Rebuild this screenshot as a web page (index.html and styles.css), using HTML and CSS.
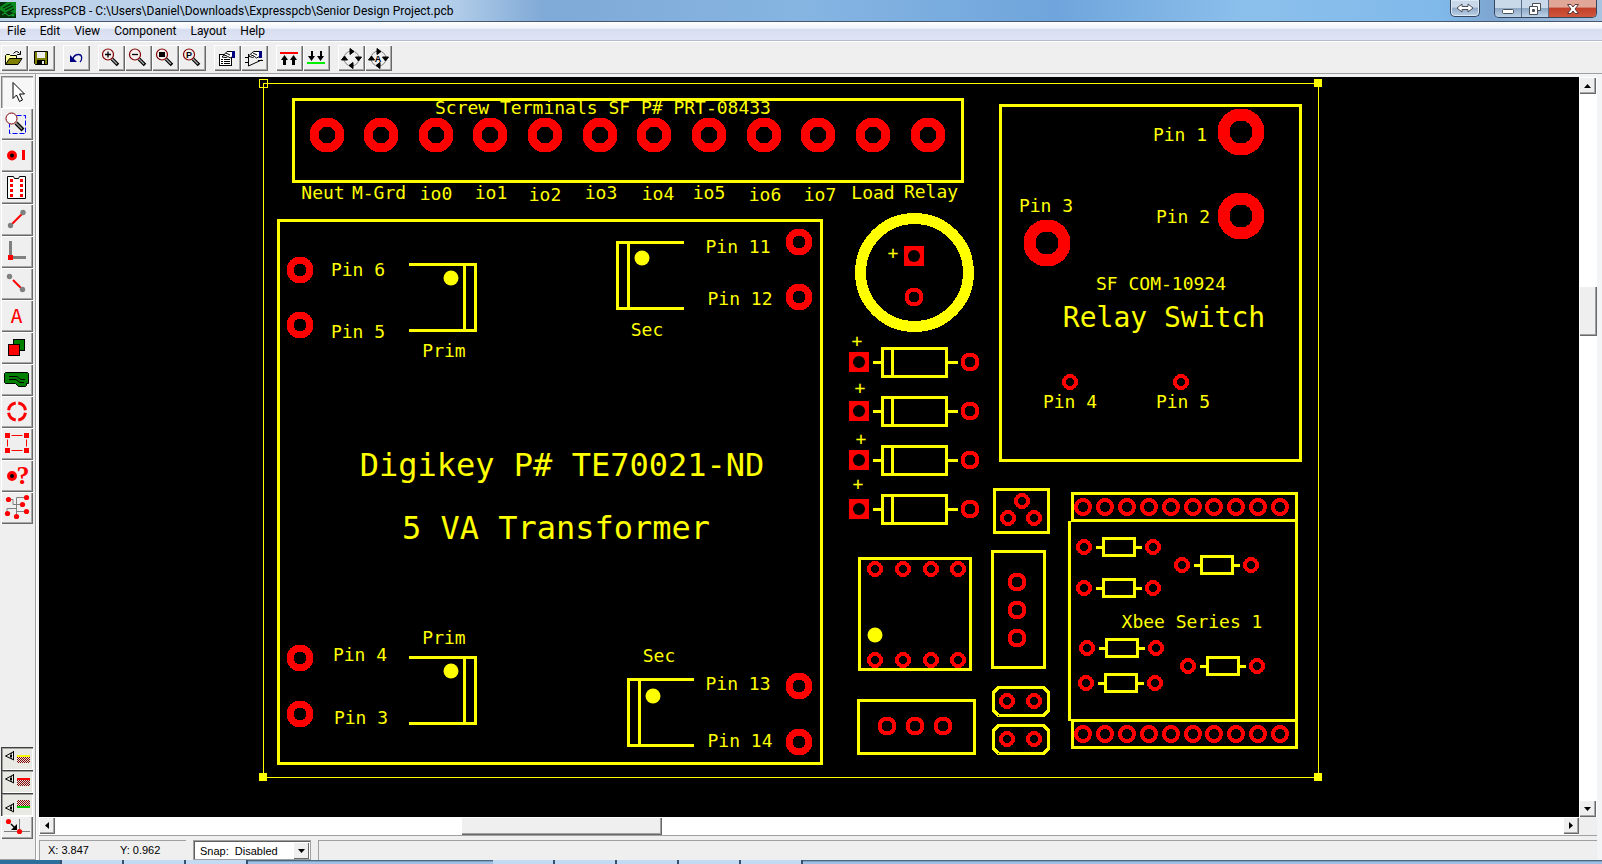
FILE: index.html
```html
<!DOCTYPE html>
<html lang="en">
<head>
<meta charset="utf-8">
<title>ExpressPCB - C:\Users\Daniel\Downloads\Expresspcb\Senior Design Project.pcb</title>
<link rel="stylesheet" href="styles.css">
</head>
<body>
<div class="window">
  <header class="titlebar">
    <svg class="app-icon" width="16" height="16" viewBox="0 0 16 16" aria-hidden="true">
      <rect width="16" height="16" fill="#0a8a1e"/>
      <path d="M0 0h7L0 5zM0 8l5 3 4-2 7 3v4H0z" fill="#04300a"/>
      <path d="M3 6l8-4M5 8l8-4M8 10l6-3" stroke="#032806" stroke-width="1.2"/>
      <path d="M2 13l3-2 4 3 4-2" stroke="#1fb03a" fill="none"/>
      <circle cx="13" cy="13" r="1.600" fill="#12a02c"/>
    </svg>
    <h1 class="title">ExpressPCB - C:\Users\Daniel\Downloads\Expresspcb\Senior Design Project.pcb</h1>
    <div class="caption">
      <button class="cap cap-size" aria-label="Resize"><svg width="18" height="10" viewBox="0 0 18 10"><path d="M1 5l5-4v2.500h6V1l5 4-5 4V6.500H6V9z" fill="#fff" stroke="#4a5058"/></svg></button>
      <div class="cap-group">
        <button class="cap cap-min" aria-label="Minimize"><svg width="14" height="12" viewBox="0 0 14 12"><rect x="1.500" y="6.500" width="11" height="4" rx="1" fill="#fff" stroke="#4a5058"/></svg></button>
        <button class="cap cap-restore" aria-label="Restore"><svg width="14" height="12" viewBox="0 0 14 12"><path d="M4.500 .5h8v7h-8z" fill="#fff" stroke="#4a5058"/><path d="M1.500 3.500h8v8h-8zM4.500 6.500h2v2h-2z" fill="#fff" stroke="#4a5058" fill-rule="evenodd"/></svg></button>
        <button class="cap cap-close" aria-label="Close"><svg width="14" height="12" viewBox="0 0 14 12"><path d="M1.500 1.500h3.500l2 2.500 2-2.500h3.500L9 6l3.500 4.500H9L7 8l-2 2.500H1.500L5 6z" fill="#fff" stroke="#5a3a3a"/></svg></button>
      </div>
    </div>
  </header>

  <nav class="menubar">
    <button class="menu">File</button><button class="menu">Edit</button><button class="menu">View</button><button class="menu">Component</button><button class="menu">Layout</button><button class="menu">Help</button>
  </nav>

  <div class="toolbar" role="toolbar">
    <div class="group">
      <button class="tool" aria-label="Open"><svg viewBox="0 0 27 26"><path d="M4.500 19.500v-9l1-1h3l1 1h6v3" fill="#ffff9c" stroke="#000"/><path d="M4.500 19.500l4-6H21l-4 6z" fill="#808000" stroke="#000"/><path d="M12.500 8.500q3-4 6 0M19.500 6v3.500H16" fill="none" stroke="#000"/></svg></button>
      <button class="tool" aria-label="Save"><svg viewBox="0 0 27 26"><path d="M6.500 6.500h13v13h-12l-1-1z" fill="#808000" stroke="#000"/><rect x="9" y="7" width="8" height="6" fill="#eee"/><rect x="9" y="15" width="8" height="5"/><rect x="14" y="16" width="2" height="3" fill="#eee"/></svg></button>
    </div>
    <div class="group">
      <button class="tool" aria-label="Undo"><svg viewBox="0 0 27 26"><path d="M7 10v7h7z" fill="#000080"/><path d="M9.500 14.500c1-3 3-5 6-5 4 0 4 5 1.500 7.500" fill="none" stroke="#000080" stroke-width="1.300"/></svg></button>
    </div>
    <div class="group">
      <button class="tool" aria-label="Zoom in"><svg viewBox="0 0 27 26"><use href="#lens"/><path d="M7 9.500h6M10 6.500v6" stroke="#000" stroke-width="1.300"/></svg></button>
      <button class="tool" aria-label="Zoom out"><svg viewBox="0 0 27 26"><use href="#lens"/><path d="M7 9.500h6" stroke="#000" stroke-width="1.300"/></svg></button>
      <button class="tool" aria-label="Zoom to fit"><svg viewBox="0 0 27 26"><use href="#lens"/><rect x="7" y="7" width="6" height="5"/></svg></button>
      <button class="tool" aria-label="Zoom previous"><svg viewBox="0 0 27 26"><use href="#lens"/><text x="10" y="13" class="glyph-s">P</text></svg></button>
    </div>
    <div class="group">
      <button class="tool" aria-label="Properties"><svg viewBox="0 0 27 26"><rect x="5.500" y="9.500" width="12" height="11" fill="#fff" stroke="#000"/><path d="M7 14.500h2M10 14.500h6M7 16.500h2M10 16.500h6M7 18.500h2M10 18.500h6" stroke="#000"/><path d="M8 12l5-5.500h6v5l-3 1.500-2-1.500-2 1z" fill="#fff" stroke="#000"/><path d="M10 10l3 1M12 8l4 2" stroke="#000"/><rect x="18" y="6" width="3" height="7" fill="#000080"/></svg></button>
      <button class="tool" aria-label="Component properties"><svg viewBox="0 0 27 26"><path d="M7.500 9v12l13-6M4 12.500h3M4 17.500h3M17 15.500h5" fill="none" stroke="#000"/><path d="M7.500 11l5-4.500h6v5l-3 1.500-2-1.500-2 1z" fill="#fff" stroke="#000"/><path d="M10 10l3 1M12 8l4 2" stroke="#000"/><rect x="18" y="6" width="3" height="7" fill="#000080"/></svg></button>
    </div>
    <div class="group">
      <button class="tool" aria-label="Top layer"><svg viewBox="0 0 27 26"><rect x="4" y="7" width="18" height="2" fill="red"/><path d="M8.500 10l3.500 5h-2v5H7v-5H5zM17.500 10l3.500 5h-2v5h-3v-5h-2z"/></svg></button>
      <button class="tool" aria-label="Bottom layer"><svg viewBox="0 0 27 26"><rect x="4" y="17" width="18" height="2" fill="#0e0"/><path d="M8.500 16L12 11h-2V6H8v5H5zM17.500 16l3.500-5h-2V6h-2v5h-3z"/></svg></button>
    </div>
    <div class="group">
      <button class="tool" aria-label="Rotate"><svg viewBox="0 0 27 26"><use href="#spin"/></svg></button>
      <button class="tool" aria-label="Rotate by angle"><svg viewBox="0 0 27 26"><use href="#spin"/><text x="13" y="17" class="glyph-s">A</text></svg></button>
    </div>
  </div>

  <div class="main">
    <aside class="palette">
      <div class="stack">
        <button class="side on" aria-label="Select"><svg viewBox="0 0 32 32"><path d="M12 6.500v16l3.500-3.500 3 6.500 3-1.500-3-6h5z" fill="#fff" stroke="#000"/></svg></button>
        <button class="side" aria-label="Zoom area"><svg viewBox="0 0 32 32"><path d="M8.500 7.500h16v18h-16z" fill="none" stroke="#00f" stroke-dasharray="5 2"/><path d="M15 15l7 7" stroke="#000" stroke-width="4"/><path d="M15 15l6 6" stroke="#999" stroke-width="1.500"/><circle cx="10.500" cy="10.500" r="5.500" fill="#fff" stroke="#800000"/></svg></button>
        <button class="side" aria-label="Place pad"><svg viewBox="0 0 32 32"><circle cx="11" cy="15.500" r="3.500" stroke="red" stroke-width="3"/><rect x="21" y="10" width="3" height="10" fill="red"/></svg></button>
        <button class="side" aria-label="Place component"><svg viewBox="0 0 32 32"><path d="M6.500 4.500h6l1 2h4l1-2h6v22h-18z" fill="#fff" stroke="#000"/><path d="M10.500 7v20M20.500 7v20" stroke="red" stroke-width="3" stroke-dasharray="3 2"/></svg></button>
        <button class="side" aria-label="Place trace"><svg viewBox="0 0 32 32"><path d="M10 21L22 9" stroke="red" stroke-width="2"/><circle cx="22" cy="8.500" r="2.700" fill="gray"/><circle cx="9.500" cy="21.500" r="2.700" fill="gray"/></svg></button>
        <button class="side" aria-label="Insert corner"><svg viewBox="0 0 32 32"><path d="M9.500 5v16.500H25" fill="none" stroke="gray" stroke-width="3"/><rect x="7" y="19" width="5" height="5" fill="red"/></svg></button>
        <button class="side" aria-label="Disconnect trace"><svg viewBox="0 0 32 32"><path d="M12 12l8 8" stroke="red" stroke-width="2"/><circle cx="8.500" cy="8.500" r="2.700" fill="gray"/><circle cx="21.500" cy="21.500" r="2.700" fill="gray"/></svg></button>
        <button class="side" aria-label="Place text"><svg viewBox="0 0 32 32"><text x="15.500" y="23" class="glyph-a">A</text></svg></button>
        <button class="side" aria-label="Place rectangle"><svg viewBox="0 0 32 32"><rect x="12.500" y="7.500" width="11" height="11" fill="green" stroke="#000"/><rect x="7.500" y="12.500" width="11" height="11" fill="red" stroke="#000"/></svg></button>
        <button class="side" aria-label="Filled plane"><svg viewBox="0 0 32 32"><path d="M4.500 8.500h22l1 1v10h-2v2l-1 1h-7l-3-3h-10l-1-1v-9z" fill="green" stroke="#000"/><path d="M8 12.500h8l4 3h4M8 15.500h7l4 3h4" fill="none" stroke="#000"/></svg></button>
        <button class="side" aria-label="Place arc"><svg viewBox="0 0 32 32"><circle cx="16" cy="15.500" r="8.500" fill="none" stroke="red" stroke-width="3" pathLength="80" stroke-dasharray="16 4" stroke-dashoffset="-2"/></svg></button>
        <button class="side" aria-label="Edit perimeter"><svg viewBox="0 0 32 32"><path d="M6.500 7.500h19v15h-19z" fill="none" stroke="red"/><path d="M4 5h5v5H4zM23 5h5v5h-5zM4 20h5v5H4zM23 20h5v5h-5z" fill="red" stroke="#efefef" stroke-width="3" paint-order="stroke"/></svg></button>
        <button class="side" aria-label="Pad information"><svg viewBox="0 0 32 32"><circle cx="11" cy="16" r="3.500" stroke="red" stroke-width="3"/><text x="22" y="24" class="glyph-q">?</text></svg></button>
        <button class="side" aria-label="Highlight net"><svg viewBox="0 0 32 32"><path d="M7 7.500h5v5h9M25 5.500h-9.500v19M6 19.500v-3h9.500M15.500 19.500H25" fill="none" stroke="gray"/><g fill="red"><circle cx="7.500" cy="7.500" r="2.600"/><circle cx="25.500" cy="5.500" r="2.600"/><circle cx="21.500" cy="12.500" r="2.600"/><circle cx="6.500" cy="21.500" r="2.600"/><circle cx="15.500" cy="24.500" r="2.600"/><circle cx="25.500" cy="19.500" r="2.600"/></g></svg></button>
      </div>
      <div class="stack">
        <button class="layer on" aria-label="Show silkscreen"><svg viewBox="0 0 32 23"><use href="#eye"/><rect x="16" y="8" width="13" height="2" fill="#ff0"/><rect x="16" y="10" width="13" height="6" fill="url(#hatch)"/></svg></button>
        <button class="layer on" aria-label="Show top copper"><svg viewBox="0 0 32 23"><use href="#eye"/><rect x="16" y="8" width="13" height="2" fill="red"/><rect x="16" y="10" width="13" height="6" fill="url(#hatch)"/></svg></button>
        <button class="layer on" aria-label="Show bottom copper"><svg viewBox="0 0 32 23"><use href="#eye" y="6"/><rect x="16" y="13" width="13" height="2" fill="#0c0"/><rect x="16" y="7" width="13" height="6" fill="url(#hatch)"/></svg></button>
        <button class="layer" aria-label="Snap to grid"><svg viewBox="0 0 32 23"><path d="M18.500 3v14M3 15.500h26" stroke="gray"/><path d="M10 8l4 4" stroke="#000" stroke-width="1.500"/><path d="M16 8v6h-6z"/><circle cx="7.500" cy="5.500" r="2.600" fill="red"/><circle cx="18.500" cy="15.500" r="2.600" fill="red"/></svg></button>
      </div>
    </aside>

    <section class="workspace">
      <div class="viewport">
        <svg class="board" viewBox="39 77 1540 740" preserveAspectRatio="xMinYMin meet" role="img" aria-label="Printed circuit board layout">
          <defs>
            <g id="lens"><path d="M14 14l6 6" stroke="#000" stroke-width="3.500"/><path d="M14 14l5 5" stroke="#aaa" stroke-width="1.200"/><circle cx="10" cy="9.500" r="5.500" fill="#f4eeee" stroke="#800000" stroke-width="1.200"/></g>
            <g id="spin"><circle cx="13.500" cy="13.500" r="7.500" fill="none" stroke="gray"/><path d="M12 3.500l4 3-4 3zM15 17.500l-4 3 4 3zM3.500 15l3-4 3 4zM17.500 12h6l-3 4z" stroke="#000"/></g>
            <g id="eye" fill="none" stroke="#000"><path d="M13 4.500L4.500 9l8.500 4M10.500 6l-1 3 1 3M12.500 4v9"/><rect x="9" y="8" width="2" height="2" fill="#000" stroke="none"/></g>
            <pattern id="hatch" width="2" height="2" patternUnits="userSpaceOnUse"><rect width="2" height="2" fill="#e8e4e0"/><path d="M0 0h1v1H0zM1 1h1v1H1z" fill="#800000"/></pattern>
            <circle id="pad-xl" r="17.500" class="pad" stroke-width="12"/>
            <circle id="pad-l" r="13" class="pad" stroke-width="9"/>
            <circle id="pad-m" r="10" class="pad" stroke-width="7"/>
            <circle id="pad-s" r="7.500" class="pad" stroke-width="4"/>
            <circle id="pad-h" r="7" class="pad" stroke-width="4"/>
            <circle id="pad-t" r="6" class="pad" stroke-width="4"/>
            <g id="pad-sq"><rect x="-10" y="-10" width="20" height="20" fill="red"/><circle r="6" fill="#000"/></g>
            <circle id="dot" r="7.500" fill="#ff0"/>
            <g id="diode"><use href="#pad-sq"/><use href="#pad-s" x="111"/><path class="ink" d="M23.500-13.500h64v28h-64zM33.500-13.500v28M15.500.5h8M87.500.5h10"/></g>
            <g id="resistor"><use href="#pad-t"/><use href="#pad-t" x="69"/><path class="ink" d="M19.500-8.500h31v17h-31zM13.500.5h6M50.500.5h6"/></g>
            <g id="header"><path class="ink" d="M1072.500-13.500h224v27h-224z"/><use href="#pad-h" x="1083"/><use href="#pad-h" x="1105"/><use href="#pad-h" x="1127"/><use href="#pad-h" x="1149"/><use href="#pad-h" x="1171"/><use href="#pad-h" x="1193"/><use href="#pad-h" x="1214"/><use href="#pad-h" x="1236"/><use href="#pad-h" x="1258"/><use href="#pad-h" x="1280"/></g>
            <g id="jumper"><path class="ink" d="M998.500-13.500h45l5 5v18l-5 5h-45l-5-5v-18z"/><use href="#pad-t" x="1007"/><use href="#pad-t" x="1034"/></g>
          </defs>

          <path class="edge" d="M263.500 83.500h1055v694h-1055z"/>
          <path class="edge" d="M259.500 79.500h8v8h-8z"/>
          <path fill="#ff0" d="M1314 79h8v8h-8zM259 773h8v8h-8zM1314 773h8v8h-8z"/>

          <path class="ink" d="M293.500 99.500h669v82h-669z"/>
          <use href="#pad-l" x="327" y="135"/><use href="#pad-l" x="381" y="135"/><use href="#pad-l" x="436" y="135"/><use href="#pad-l" x="490" y="135"/><use href="#pad-l" x="545" y="135"/><use href="#pad-l" x="600" y="135"/><use href="#pad-l" x="654" y="135"/><use href="#pad-l" x="709" y="135"/><use href="#pad-l" x="764" y="135"/><use href="#pad-l" x="818" y="135"/><use href="#pad-l" x="873" y="135"/><use href="#pad-l" x="928" y="135"/>
          <g class="label">
            <text x="603" y="114">Screw Terminals SF P# PRT-08433</text>
            <text x="323" y="199">Neut</text><text x="379" y="199">M-Grd</text><text x="436" y="200">io0</text><text x="491" y="199">io1</text><text x="545" y="201">io2</text><text x="601" y="199">io3</text><text x="658" y="200">io4</text><text x="709" y="199">io5</text><text x="765" y="201">io6</text><text x="820" y="201">io7</text><text x="873" y="199">Load</text><text x="931" y="198">Relay</text>
          </g>

          <path class="ink" d="M278.500 220.500h543v543h-543z"/>
          <path class="ink" d="M410.500 264.500h65v66h-65M464.500 264.500v66"/><use href="#dot" x="451" y="278"/>
          <path class="ink" d="M682.500 242.500h-65v66h65M628.500 242.500v66"/><use href="#dot" x="642" y="258"/>
          <path class="ink" d="M410.500 657.500h65v66h-65M464.500 657.500v66"/><use href="#dot" x="451" y="671"/>
          <path class="ink" d="M692.500 679.500h-64v66h64M639.500 679.500v66"/><use href="#dot" x="653" y="696"/>
          <use href="#pad-m" x="300" y="270"/><use href="#pad-m" x="300" y="325"/><use href="#pad-m" x="300" y="658"/><use href="#pad-m" x="300" y="714"/>
          <use href="#pad-m" x="799" y="242"/><use href="#pad-m" x="799" y="297"/><use href="#pad-m" x="799" y="686"/><use href="#pad-m" x="799" y="742"/>
          <g class="label">
            <text x="358" y="276">Pin 6</text><text x="358" y="338">Pin 5</text><text x="444" y="357">Prim</text>
            <text x="738" y="253">Pin 11</text><text x="740" y="305">Pin 12</text><text x="647" y="336">Sec</text>
            <text x="444" y="644">Prim</text><text x="360" y="661">Pin 4</text><text x="361" y="724">Pin 3</text>
            <text x="659" y="662">Sec</text><text x="738" y="690">Pin 13</text><text x="740" y="747">Pin 14</text>
          </g>
          <g class="label label-xl"><text x="562" y="476">Digikey P# TE70021-ND</text><text x="556" y="539">5 VA Transformer</text></g>

          <circle cx="914.500" cy="272.500" r="54" fill="none" stroke="#ff0" stroke-width="11" shape-rendering="crispEdges"/>
          <use href="#pad-sq" x="914" y="256"/><use href="#pad-s" x="914" y="297"/>
          <use href="#diode" x="859" y="362"/><use href="#diode" x="859" y="411"/><use href="#diode" x="859" y="460"/><use href="#diode" x="859" y="509"/>
          <g class="label"><text x="893" y="259">+</text><text x="857" y="347">+</text><text x="860" y="394">+</text><text x="861" y="445">+</text><text x="858" y="490">+</text></g>

          <path class="ink" d="M1000.500 105.500h300v355h-300z"/>
          <use href="#pad-xl" x="1241" y="132"/><use href="#pad-xl" x="1241" y="216"/><use href="#pad-xl" x="1047" y="243"/><use href="#pad-t" x="1070" y="382"/><use href="#pad-t" x="1181" y="382"/>
          <g class="label"><text x="1180" y="141">Pin 1</text><text x="1183" y="223">Pin 2</text><text x="1046" y="212">Pin 3</text><text x="1161" y="290">SF COM-10924</text><text x="1070" y="408">Pin 4</text><text x="1183" y="408">Pin 5</text></g>
          <g class="label label-l"><text x="1164" y="327">Relay Switch</text></g>

          <path class="ink" d="M994.500 489.500h54v43h-54z"/><use href="#pad-t" x="1022" y="501"/><use href="#pad-t" x="1008" y="518"/><use href="#pad-t" x="1034" y="518"/>
          <path class="ink" d="M859.500 558.500h111v111h-111z"/>
          <use href="#pad-t" x="875" y="569"/><use href="#pad-t" x="903" y="569"/><use href="#pad-t" x="931" y="569"/><use href="#pad-t" x="958" y="569"/>
          <use href="#pad-t" x="875" y="660"/><use href="#pad-t" x="903" y="660"/><use href="#pad-t" x="931" y="660"/><use href="#pad-t" x="958" y="660"/><use href="#dot" x="875" y="635"/>
          <path class="ink" d="M992.500 551.500h52v116h-52z"/><use href="#pad-s" x="1017" y="582"/><use href="#pad-s" x="1017" y="610"/><use href="#pad-s" x="1017" y="638"/>
          <path class="ink" d="M858.500 700.500h116v53h-116z"/><use href="#pad-s" x="887" y="726"/><use href="#pad-s" x="915" y="726"/><use href="#pad-s" x="943" y="726"/>
          <use href="#jumper" y="701"/><use href="#jumper" y="739"/>

          <use href="#header" y="507"/><use href="#header" y="734"/>
          <path class="ink" d="M1069.500 522.500v197M1296.500 522.500v197"/>
          <use href="#resistor" x="1084" y="547"/><use href="#resistor" x="1084" y="588"/><use href="#resistor" x="1182" y="565"/><use href="#resistor" x="1087" y="648"/><use href="#resistor" x="1086" y="683"/><use href="#resistor" x="1188" y="666"/>
          <g class="label"><text x="1192" y="628">Xbee Series 1</text></g>
        </svg>
        <div class="scroll vscroll">
          <button class="arrow" aria-label="Scroll up"><svg width="7" height="4" viewBox="0 0 7 4"><path d="M0 4l3.500-4L7 4z"/></svg></button>
          <div class="v-before"></div><div class="thumb v-thumb"></div><div class="v-after"></div>
          <button class="arrow" aria-label="Scroll down"><svg width="7" height="4" viewBox="0 0 7 4"><path d="M0 0l3.500 4L7 0z"/></svg></button>
        </div>
      </div>
      <div class="hrow">
        <div class="scroll hscroll">
          <button class="arrow" aria-label="Scroll left"><svg width="4" height="7" viewBox="0 0 4 7"><path d="M4 0L0 3.500 4 7z"/></svg></button>
          <div class="h-before"></div><div class="thumb h-thumb"></div><div class="h-after"></div>
          <button class="arrow" aria-label="Scroll right"><svg width="4" height="7" viewBox="0 0 4 7"><path d="M0 0l4 3.500L0 7z"/></svg></button>
        </div>
      </div>
      <footer class="status">
        <div class="pane coords"><span>X: 3.847</span><span>Y: 0.962</span></div>
        <div class="snap">
          <select class="snap-select" aria-label="Snap"><option>Snap: &nbsp;Disabled</option></select>
          <span class="snap-arrow" aria-hidden="true"><svg width="7" height="4" viewBox="0 0 7 4"><path d="M0 0l3.500 4L7 0z"/></svg></span>
        </div>
        <div class="pane message"></div>
      </footer>
    </section>
  </div>
  <div class="taskbar"><i class="task start"></i><i class="task"></i><i class="task"></i><i class="task"></i><i class="space"></i><i class="task"></i><i class="task"></i><i class="task"></i><i class="task"></i><i class="task"></i></div>
</div>
</body>
</html>
```
FILE: styles.css
```css
* { box-sizing: border-box; }
body { margin: 0; background: #f0f0f0; color: #000; font-family: Roboto, "Noto Sans", sans-serif; font-size: 12px; }
button { padding: 0; border: 0; background: none; font: inherit; color: inherit; display: flex; align-items: center; justify-content: center; }
svg { display: block; }

.window { display: flex; flex-direction: column; height: 100vh; overflow: hidden; }

.titlebar {
  flex: none; display: flex; height: 22px; border-bottom: 1px solid #46566c; overflow: hidden;
  background: linear-gradient(90deg, #bdd3ea 0, #b4cfea 28%, #7fa9d6 34%, #86b5e2 50%, #6fa5dc 66%, #8cc0ec 78%, #7fb9ea 90%, #7ea6d2 93%, #a9c4e0 100%);
}
.app-icon { flex: none; margin-top: 2px; }
.title { flex: 1; margin: 0; padding-left: 5px; font-size: 12px; font-weight: 400; line-height: 22px; white-space: nowrap; }
.caption { display: flex; gap: 14px; padding-right: 5px; }
.cap { height: 17px; background: linear-gradient(#c9d9ea 0 45%, #8fa9c6 50%, #bcd2e8); }
.cap-size { width: 30px; border: 1px solid #34455c; border-top: 0; border-radius: 0 0 5px 5px; box-shadow: inset 0 0 0 1px #dbe8f5; }
.cap-group { display: flex; height: 18px; border: 1px solid #34455c; border-top: 0; border-radius: 0 0 5px 5px; overflow: hidden; }
.cap-min, .cap-restore { width: 27px; border-right: 1px solid #5a6e88; }
.cap-close { width: 47px; background: linear-gradient(#e0a798 0 40%, #c3402a 50%, #d0563c); }

.menubar { flex: none; display: flex; gap: 14px; height: 19px; padding-left: 7px; background: linear-gradient(#fff 0, #f0f3fa 35%, #d7deef 40%, #dfe5f5); border-bottom: 1px solid #b6bccc; }
.menu { height: 18px; }

.toolbar { flex: none; display: flex; gap: 8px; height: 33px; padding: 3px 0 0 1px; background: #efefef; border-top: 1px solid #fff; border-bottom: 1px solid #a0a0a0; }
.group { display: flex; }
.tool, .side, .layer, .arrow { background: #efefef; box-shadow: inset 1px 1px #fff, inset -1px -1px #696969, inset -2px -2px #a8a8a8; }
.tool { width: 27px; height: 26px; }
.tool svg { width: 27px; height: 26px; }

.main { flex: 1; display: flex; min-height: 0; }
.palette { flex: none; display: flex; flex-direction: column; justify-content: space-between; width: 36px; padding: 2px 0 20px 1px; background: #efefef; border-right: 1px solid #a0a0a0; border-bottom: 1px solid #a0a0a0; }
.side { width: 32px; height: 32px; }
.side svg { width: 32px; height: 32px; }
.layer { width: 32px; height: 23px; }
.layer svg { width: 32px; height: 23px; }
.on { background: #e9e9e4; box-shadow: inset 1px 1px #404040, inset 2px 2px #a0a0a0, inset -1px -1px #fff; }
.side.on { background: #f7f7f7; box-shadow: inset 1px 1px #808080, inset 2px 2px #c0c0c0, inset -1px -1px #fff; }

.workspace { flex: 1; display: flex; flex-direction: column; min-width: 0; padding: 3px 5px 0 2px; background: #f2f4f6; border-left: 1px solid #fff; }
.viewport { flex: 1; display: flex; min-height: 0; background: #000; }
.board { flex: 1; min-width: 0; height: 100%; }
.scroll { display: flex; background: #fff; }
.vscroll { flex: none; flex-direction: column; width: 18px; }
.v-before { flex: 192; }
.v-thumb { flex: 50; }
.v-after { flex: 463; }
.hrow { flex: none; height: 19px; padding-right: 18px; border-bottom: 1px solid #a0a0a0; background: #efefef; }
.hscroll { height: 18px; }
.h-before { flex: 405; }
.h-thumb { flex: 201; }
.h-after { flex: 900; }
.thumb { background: #efefef; box-shadow: inset 1px 1px #fff, inset -1px -1px #696969, inset -2px -2px #a0a0a0; }
.arrow { flex: none; width: 16px; height: 17px; }
.vscroll .arrow { width: 17px; }

.status { flex: none; display: flex; gap: 7px; height: 24px; padding-top: 4px; background: #efefef; font-family: "Liberation Sans", Arial, sans-serif; font-size: 11px; }
.pane { border: 1px solid #a0a0a0; border-width: 1px 0 0 1px; }
.coords { display: flex; gap: 31px; width: 147px; padding-left: 8px; line-height: 18px; }
.message { flex: 1; }
.snap { position: relative; width: 118px; border: 1px solid #a0a0a0; }
.snap-select { width: 100%; height: 100%; padding: 0 0 0 5px; border: 1px solid #606060; border-width: 1px 0 0 1px; border-radius: 0; background: #fff; color: #000; font: inherit; appearance: none; }
.snap-arrow { position: absolute; top: 1px; right: 1px; bottom: 0; width: 16px; display: flex; align-items: center; justify-content: center; background: #efefef; box-shadow: inset 1px 1px #fff, inset -1px -1px #696969; pointer-events: none; }

.taskbar { flex: none; display: flex; height: 4px; background: linear-gradient(#2c4a66, #9fc0e4 50%); }
.task { width: 62px; border-right: 2px solid #33516e; background: #c3daf2; }
.task.start { background: #2d6f9c; }
.space { width: 245px; }

.ink { fill: none; stroke: #ff0; stroke-width: 3px; stroke-linecap: round; stroke-linejoin: round; shape-rendering: crispEdges; }
.edge { fill: none; stroke: #ff0; stroke-width: 1px; shape-rendering: crispEdges; }
.pad { fill: none; stroke: red; shape-rendering: crispEdges; }
.label { fill: #ff0; font-family: "DejaVu Sans Mono", monospace; font-size: 18px; text-anchor: middle; }
.label-l { font-size: 28px; }
.label-xl { font-size: 32px; }
.glyph-s { font: 700 9px "Liberation Sans", sans-serif; text-anchor: middle; }
.glyph-a { font: 20px "DejaVu Sans Mono", monospace; fill: red; text-anchor: middle; }
.glyph-q { font: 700 26px "Liberation Serif", serif; fill: red; text-anchor: middle; }
```
